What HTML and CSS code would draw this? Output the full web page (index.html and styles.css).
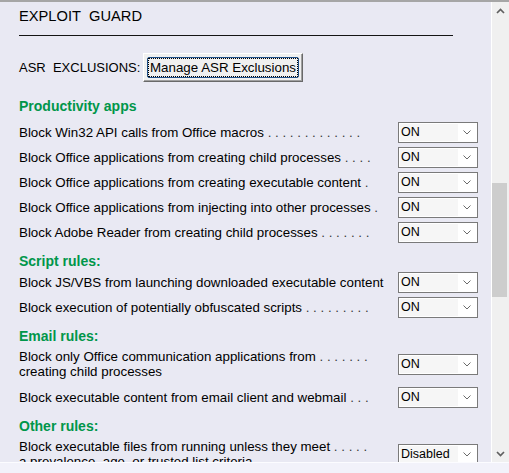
FILE: index.html
```
<!DOCTYPE html>
<html>
<head>
<meta charset="utf-8">
<link rel="stylesheet" href="styles.css">
</head>
<body>
<div class="window">
  <div class="main">
    <div class="content">
      <div class="title">EXPLOIT&nbsp;&nbsp;GUARD</div>
      <div class="rule"></div>
      <div class="asr">
        <span class="asr-label">ASR&nbsp;&nbsp;EXCLUSIONS:</span>
        <button class="btn"><span class="btn-focus"><span class="btn-dots">Manage ASR Exclusions</span></span></button>
      </div>

      <div class="group first">Productivity apps</div>
      <div class="row"><div class="label">Block Win32 API calls from Office macros <span class="dots">. . . . . . . . . . . . .</span></div><div class="select"><span class="val">ON</span><svg class="chev" width="8" height="5" viewBox="0 0 8 5"><path d="M0.5 0.5 L4 4 L7.5 0.5"/></svg></div></div>
      <div class="row"><div class="label">Block Office applications from creating child processes <span class="dots">. . . .</span></div><div class="select"><span class="val">ON</span><svg class="chev" width="8" height="5" viewBox="0 0 8 5"><path d="M0.5 0.5 L4 4 L7.5 0.5"/></svg></div></div>
      <div class="row"><div class="label">Block Office applications from creating executable content <span class="dots">.</span></div><div class="select"><span class="val">ON</span><svg class="chev" width="8" height="5" viewBox="0 0 8 5"><path d="M0.5 0.5 L4 4 L7.5 0.5"/></svg></div></div>
      <div class="row"><div class="label">Block Office applications from injecting into other processes <span class="dots">.</span></div><div class="select"><span class="val">ON</span><svg class="chev" width="8" height="5" viewBox="0 0 8 5"><path d="M0.5 0.5 L4 4 L7.5 0.5"/></svg></div></div>
      <div class="row"><div class="label">Block Adobe Reader from creating child processes <span class="dots">. . . . . . .</span></div><div class="select"><span class="val">ON</span><svg class="chev" width="8" height="5" viewBox="0 0 8 5"><path d="M0.5 0.5 L4 4 L7.5 0.5"/></svg></div></div>

      <div class="group">Script rules:</div>
      <div class="row"><div class="label">Block JS/VBS from launching downloaded executable content</div><div class="select"><span class="val">ON</span><svg class="chev" width="8" height="5" viewBox="0 0 8 5"><path d="M0.5 0.5 L4 4 L7.5 0.5"/></svg></div></div>
      <div class="row"><div class="label">Block execution of potentially obfuscated scripts <span class="dots">. . . . . . . . .</span></div><div class="select"><span class="val">ON</span><svg class="chev" width="8" height="5" viewBox="0 0 8 5"><path d="M0.5 0.5 L4 4 L7.5 0.5"/></svg></div></div>

      <div class="group">Email rules:</div>
      <div class="row two"><div class="label">Block only Office communication applications from <span class="dots">. . . . . . .</span><br>creating child processes</div><div class="select"><span class="val">ON</span><svg class="chev" width="8" height="5" viewBox="0 0 8 5"><path d="M0.5 0.5 L4 4 L7.5 0.5"/></svg></div></div>
      <div class="row after-two"><div class="label">Block executable content from email client and webmail <span class="dots">. . .</span></div><div class="select"><span class="val">ON</span><svg class="chev" width="8" height="5" viewBox="0 0 8 5"><path d="M0.5 0.5 L4 4 L7.5 0.5"/></svg></div></div>

      <div class="group">Other rules:</div>
      <div class="row two"><div class="label">Block executable files from running unless they meet <span class="dots">. . . . .</span><br>a prevalence, age, or trusted list criteria</div><div class="select"><span class="val">Disabled</span><svg class="chev" width="8" height="5" viewBox="0 0 8 5"><path d="M0.5 0.5 L4 4 L7.5 0.5"/></svg></div></div>
    </div>
    <div class="scrollbar">
      <div class="sb-btn"><svg width="9" height="6" viewBox="0 0 9 6"><path d="M1 5 L4.5 1.5 L8 5"/></svg></div>
      <div class="sb-track"><div class="sb-thumb"></div></div>
      <div class="sb-btn"><svg width="9" height="6" viewBox="0 0 9 6"><path d="M1 1 L4.5 4.5 L8 1"/></svg></div>
    </div>
  </div>
  <div class="status"></div>
</div>
</body>
</html>
```
FILE: styles.css
```
html, body {
  margin: 0;
  padding: 0;
}
body {
  background: #e9e9f3;
  font-family: "Liberation Sans", Arial, sans-serif;
  color: #000;
}
.window {
  width: 509px;
  height: 473px;
  box-sizing: border-box;
  border-top: 2px solid #a6a6a6;
  display: flex;
  flex-direction: column;
  overflow: hidden;
}
.main {
  display: flex;
  height: 460px;
}
.content {
  flex: 1;
  overflow: hidden;
  padding: 6px 13px 0 19px;
}
.title {
  font-size: 14.67px;
  line-height: 17px;
  height: 17px;
}
.rule {
  width: 434px;
  height: 1px;
  background: #141414;
  margin-top: 10px;
}
.asr {
  display: flex;
  align-items: center;
  height: 29px;
  margin-top: 17px;
}
.asr-label {
  width: 124px;
  font-size: 13px;
  line-height: 15px;
}
.btn {
  width: 160px;
  height: 29px;
  box-sizing: border-box;
  margin: 0;
  padding: 3px;
  border: 1px solid;
  border-color: #ffffff #696969 #696969 #ffffff;
  box-shadow: inset -1px -1px 0 #a0a0a0;
  background: #f0f0f0;
  font-family: "Liberation Sans", Arial, sans-serif;
  font-size: 13.33px;
  color: #000;
  display: flex;
}
.btn-focus {
  flex: 1;
  display: flex;
  border: 1px solid #1f4e86;
  border-radius: 2px;
}
.btn-dots {
  flex: 1;
  display: flex;
  align-items: center;
  justify-content: center;
  border: 1px dotted #000;
  line-height: 15px;
}
.group {
  color: #00964a;
  font-weight: bold;
  font-size: 14px;
  line-height: 16px;
  height: 16px;
  margin-top: 8px;
  margin-bottom: 1px;
}
.group.first {
  margin-top: 16px;
  margin-bottom: 6px;
}
.row {
  display: flex;
  align-items: center;
  min-height: 25px;
}
.row.two {
  padding: 4px 0;
}
.row.after-two {
  margin-top: 2px;
}
.label {
  flex: 1;
  font-size: 13.33px;
  line-height: 15px;
  white-space: nowrap;
}
.dots {
  color: #3a3a3a;
}
.select {
  width: 80px;
  height: 21px;
  box-sizing: border-box;
  border: 1px solid #7a7a7a;
  background: #ffffff;
  display: flex;
  align-items: center;
  padding: 1px;
}
.val {
  width: 58px;
  height: 17px;
  background: #f6f6f6;
  font-size: 12.5px;
  line-height: 17px;
  padding-left: 1px;
  box-sizing: border-box;
}
.chev {
  margin-left: auto;
  margin-right: 5px;
}
.chev path {
  fill: none;
  stroke: #6a6a6a;
  stroke-width: 1;
}
.scrollbar {
  width: 17px;
  border-left: 1px solid #ffffff;
  background: #f0f0f0;
  display: flex;
  flex-direction: column;
}
.sb-btn {
  height: 17px;
  display: flex;
  align-items: center;
  justify-content: center;
}
.sb-btn path {
  fill: none;
  stroke: #606060;
  stroke-width: 1.7;
}
.sb-track {
  flex: 1;
}
.sb-thumb {
  width: 15px;
  height: 114px;
  margin-top: 164px;
  background: #cdcdcd;
}
.status {
  height: 11px;
  box-sizing: border-box;
  border-top: 1px solid #fcfcff;
  background: #f2f2fa;
}
```
